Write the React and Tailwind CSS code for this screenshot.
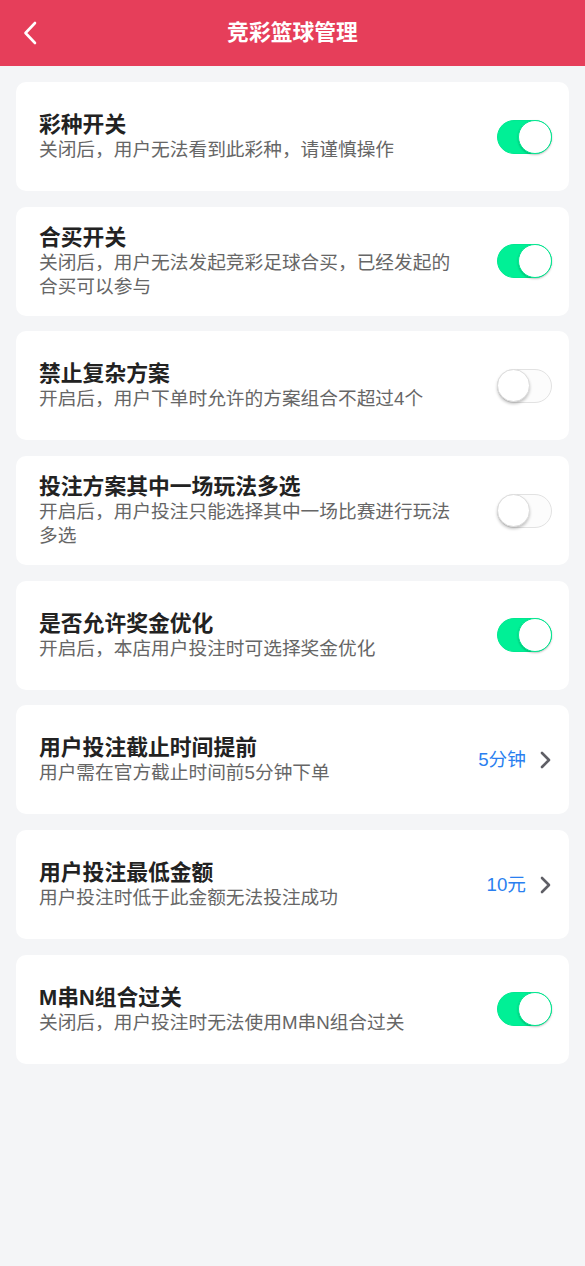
import React from "react";

const items = [
  { t: "彩种开关", s: "关闭后，用户无法看到此彩种，请谨慎操作", type: "switch", on: true },
  { t: "合买开关", s: "关闭后，用户无法发起竞彩足球合买，已经发起的合买可以参与", type: "switch", on: true },
  { t: "禁止复杂方案", s: "开启后，用户下单时允许的方案组合不超过4个", type: "switch", on: false },
  { t: "投注方案其中一场玩法多选", s: "开启后，用户投注只能选择其中一场比赛进行玩法多选", type: "switch", on: false },
  { t: "是否允许奖金优化", s: "开启后，本店用户投注时可选择奖金优化", type: "switch", on: true },
  { t: "用户投注截止时间提前", s: "用户需在官方截止时间前5分钟下单", type: "link", v: "5分钟" },
  { t: "用户投注最低金额", s: "用户投注时低于此金额无法投注成功", type: "link", v: "10元" },
  { t: "M串N组合过关", s: "关闭后，用户投注时无法使用M串N组合过关", type: "switch", on: true },
];

function Switch({ on }) {
  if (on) {
    return (
      <div className="relative w-[55px] h-[34px] rounded-full bg-[#00f096] border border-[#00e890]">
        <div className="absolute right-[-1px] top-[-1px] w-[34px] h-[34px] rounded-full bg-white border border-[#00e890] shadow-[0_1px_2px_rgba(0,0,0,0.25)]" />
      </div>
    );
  }
  return (
    <div className="relative w-[55px] h-[34px] rounded-full bg-[#fcfcfc] border border-[#e2e2e2]">
      <div className="absolute left-[-1px] top-[-1px] w-[33px] h-[33px] rounded-full bg-white border border-[#dcdcdc] shadow-[0_2px_3px_rgba(0,0,0,0.22)]" />
    </div>
  );
}

export default function App() {
  return (
    <div
      className="min-h-[1266px] bg-[#f4f5f7]"
      style={{ fontFamily: '"Liberation Sans", "Noto Sans CJK SC", sans-serif' }}
    >
      <div className="relative h-[66px] bg-[#e63e5a] flex items-center justify-center">
        <svg
          className="absolute left-[23px] top-[21px]"
          width="14"
          height="24"
          viewBox="0 0 14 24"
          fill="none"
          stroke="white"
          strokeWidth="2.6"
          strokeLinecap="round"
          strokeLinejoin="round"
        >
          <path d="M12 2 L2.5 12 L12 22" />
        </svg>
        <div className="text-white font-bold text-[21.8px] leading-none">竞彩篮球管理</div>
      </div>

      <div className="flex flex-col gap-[15.7px] px-[16px] pt-[16px]">
        {items.map((it, i) => (
          <div
            key={i}
            className="h-[109px] bg-white rounded-[10px] flex items-center justify-between pl-[23px] pr-[17px]"
          >
            <div className="max-w-[420px]">
              <div className="text-[21.8px] leading-[27px] font-bold text-[#222]">{it.t}</div>
              <div className="text-[18.7px] leading-[24px] text-[#666]">{it.s}</div>
            </div>
            {it.type === "switch" ? (
              <Switch on={it.on} />
            ) : (
              <div className="flex items-center gap-[14px] pr-[1px]">
                <span className="text-[18.7px] text-[#2a7ff0]">{it.v}</span>
                <svg width="11" height="18" viewBox="0 0 11 18" fill="none" stroke="#5f5f66" strokeWidth="2.6" strokeLinecap="round" strokeLinejoin="round">
                  <path d="M2 2 L9 9 L2 16" />
                </svg>
              </div>
            )}
          </div>
        ))}
      </div>
    </div>
  );
}
